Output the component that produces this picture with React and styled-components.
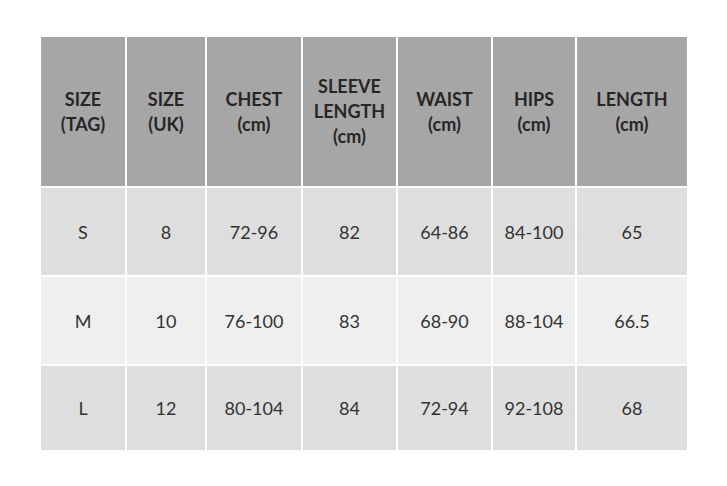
import React from "react";
import styled, { createGlobalStyle } from "styled-components";

const Global = createGlobalStyle`
  body {
    margin: 0;
    background: #ffffff;
    font-family: Lato, "Open Sans", "Liberation Sans", sans-serif;
  }
`;

const Page = styled.div`
  padding: 35px 0 0 39px;
`;

const Table = styled.table`
  border-collapse: collapse;
  table-layout: fixed;
`;

const HeadRow = styled.tr`
  height: 151px;
  background: #a6a6a6;
`;

const Row = styled.tr`
  height: ${(p) => p.h}px;
  background: ${(p) => (p.light ? "#efefef" : "#dedede")};
`;

const Th = styled.th`
  border: 2px solid #ffffff;
  padding: 0;
  text-align: center;
  vertical-align: middle;
  font-size: 18px;
  line-height: 25px;
  font-weight: 700;
  color: #262626;
`;

const Td = styled.td`
  border: 2px solid #ffffff;
  padding: 0;
  text-align: center;
  vertical-align: middle;
  font-size: 18px;
  color: #333333;
`;

const widths = [86, 80, 96, 95, 95, 84, 112];

const headers = [
  ["SIZE", "(TAG)"],
  ["SIZE", "(UK)"],
  ["CHEST", "(cm)"],
  ["SLEEVE", "LENGTH", "(cm)"],
  ["WAIST", "(cm)"],
  ["HIPS", "(cm)"],
  ["LENGTH", "(cm)"],
];

const rows = [
  { h: 89, cells: ["S", "8", "72-96", "82", "64-86", "84-100", "65"] },
  { h: 89, light: true, cells: ["M", "10", "76-100", "83", "68-90", "88-104", "66.5"] },
  { h: 86, cells: ["L", "12", "80-104", "84", "72-94", "92-108", "68"] },
];

export default function App() {
  return (
    <Page>
      <Global />
      <Table>
        <colgroup>
          {widths.map((w, i) => (
            <col key={i} style={{ width: w }} />
          ))}
        </colgroup>
        <thead>
          <HeadRow>
            {headers.map((lines, i) => (
              <Th key={i}>
                {lines.map((l, j) => (
                  <React.Fragment key={j}>
                    {j > 0 && <br />}
                    {l}
                  </React.Fragment>
                ))}
              </Th>
            ))}
          </HeadRow>
        </thead>
        <tbody>
          {rows.map((r, i) => (
            <Row key={i} h={r.h} light={r.light}>
              {r.cells.map((c, j) => (
                <Td key={j}>{c}</Td>
              ))}
            </Row>
          ))}
        </tbody>
      </Table>
    </Page>
  );
}
